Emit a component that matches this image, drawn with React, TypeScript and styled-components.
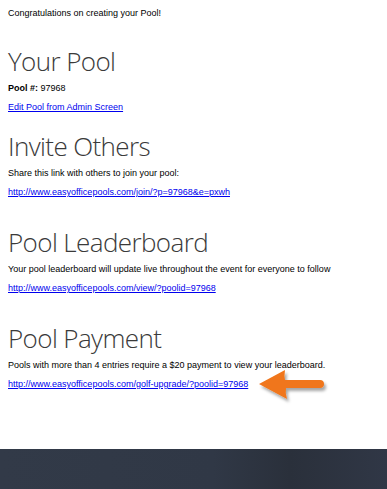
import styled, { createGlobalStyle } from "styled-components"

const GlobalStyle = createGlobalStyle`
  html, body {
    margin: 0;
    padding: 0;
    background: #fff;
  }
  body {
    font-family: "Liberation Sans", Arial, sans-serif;
    font-size: 9px;
    color: #000;
  }
`

const Arrow = () => (
  <svg width="72" height="40" viewBox="0 0 72 40" style={{ flexShrink: 0 }}>
    <defs>
      <filter id="arrowShadow" x="-20%" y="-30%" width="150%" height="180%">
        <feDropShadow dx="2" dy="3" stdDeviation="1.6" floodColor="#000" floodOpacity="0.35" />
      </filter>
    </defs>
    <path
      d="M2 18 L28 4 Q27 10 28 14 L63 14 A4 4 0 0 1 63 22 L29 22 Q28 27 30 33 Z"
      fill="#f0761a"
      filter="url(#arrowShadow)"
    />
  </svg>
)

const App = () => {
  return <Page>
    <GlobalStyle />
    <Main>
      <Line>Congratulations on creating your Pool!</Line>

      <Section $gap={27}>
        <Heading>Your Pool</Heading>
        <Line><b>Pool #:</b> 97968</Line>
        <LinkLine><a href="#preview">Edit Pool from Admin Screen</a></LinkLine>
      </Section>

      <Section $gap={18}>
        <Heading>Invite Others</Heading>
        <Line>Share this link with others to join your pool:</Line>
        <LinkLine><a href="#preview">http://www.easyofficepools.com/join/?p=97968&amp;e=pxwh</a></LinkLine>
      </Section>

      <Section $gap={29}>
        <Heading>Pool Leaderboard</Heading>
        <Line>Your pool leaderboard will update live throughout the event for everyone to follow</Line>
        <LinkLine><a href="#preview">http://www.easyofficepools.com/view/?poolid=97968</a></LinkLine>
      </Section>

      <Section $gap={29}>
        <Heading>Pool Payment</Heading>
        <Line>Pools with more than 4 entries require a $20 payment to view your leaderboard.</Line>
        <LinkLine>
          <a href="#preview">http://www.easyofficepools.com/golf-upgrade/?poolid=97968</a>
          <Arrow />
        </LinkLine>
      </Section>
    </Main>
    <Footer />
  </Page>
}

const Page = styled.div`
  display: flex;
  flex-direction: column;
  min-height: 100vh;
`

const Main = styled.div`
  padding: 8px 8px 0 8px;
  height: 449px;
  box-sizing: border-box;
`

const Section = styled.div<{ $gap: number }>`
  margin-top: ${p => p.$gap}px;
`

const Heading = styled.h2`
  margin: 0 0 7px 0;
  font-family: "Open Sans", Lato, sans-serif;
  font-weight: 300;
  font-size: 26px;
  line-height: 30px;
  letter-spacing: -0.6px;
  color: #3a3a3a;
`

const Line = styled.p`
  margin: 0;
  line-height: 11px;
  white-space: nowrap;
`

const LinkLine = styled.div`
  margin-top: 8px;
  height: 11px;
  line-height: 11px;
  display: flex;
  align-items: center;
  white-space: nowrap;

  a {
    color: #0000ee;
    text-decoration: underline;
  }

  svg {
    margin-left: 9px;
    margin-top: 2px;
  }
`

const Footer = styled.div`
  flex: 1;
  min-height: 40px;
  background: linear-gradient(90deg, #323a48 0%, #303846 55%, #2a303b 75%, #303746 100%);
`

export default App
